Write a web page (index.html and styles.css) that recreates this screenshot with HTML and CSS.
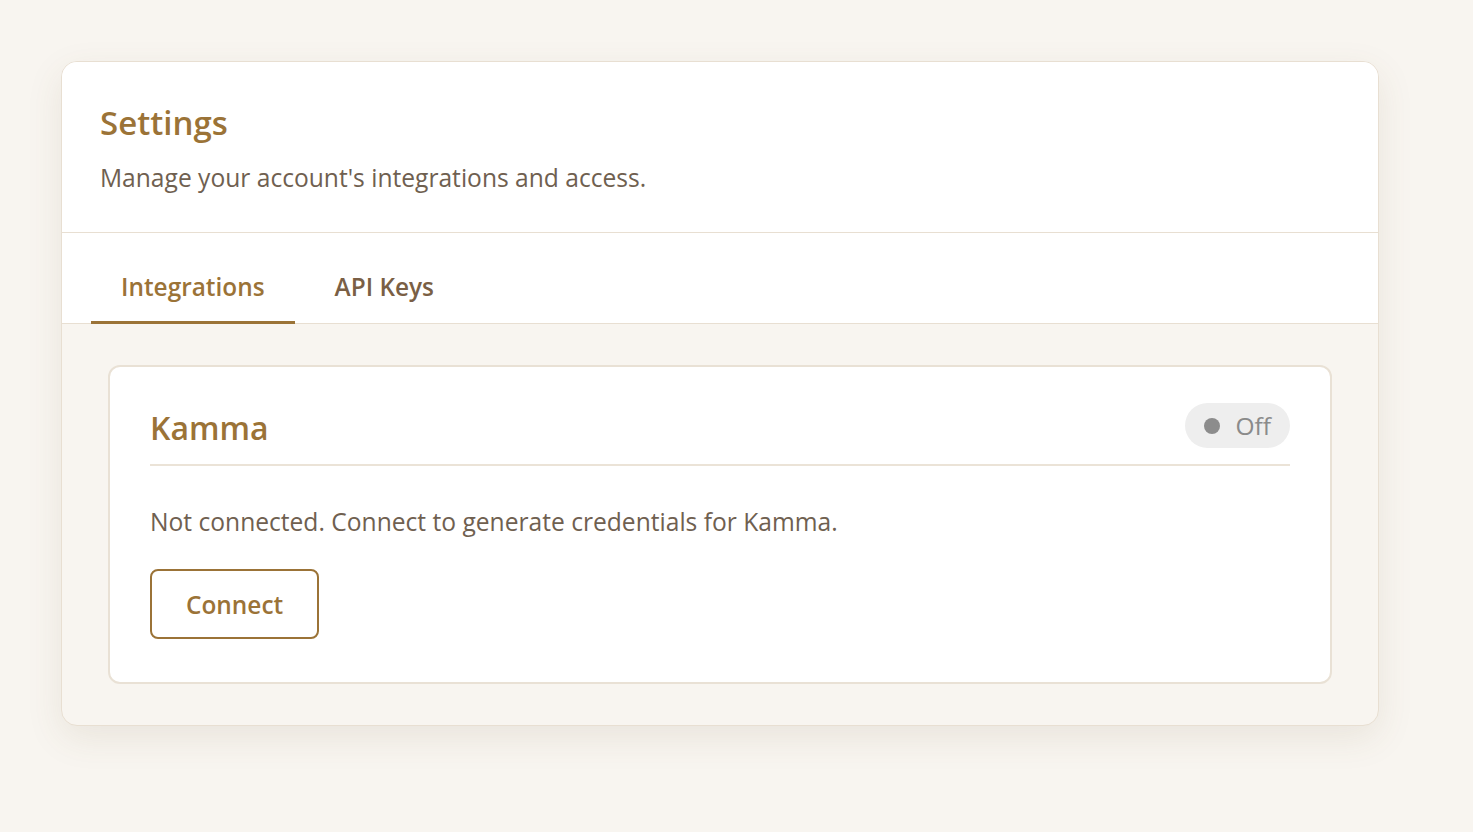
FILE: index.html
```html
<!DOCTYPE html>
<html lang="en">
<head>
<meta charset="utf-8">
<title>Settings</title>
<link rel="stylesheet" href="styles.css">
</head>
<body>
<main class="page">
  <section class="panel">
    <header class="panel-head">
      <h1 class="title">Settings</h1>
      <p class="subtitle">Manage your account's integrations and access.</p>
    </header>
    <nav class="tabs">
      <button class="tab tab-active">Integrations</button>
      <button class="tab">API Keys</button>
    </nav>
    <div class="panel-body">
      <article class="integration">
        <div class="integration-head">
          <h2 class="integration-name">Kamma</h2>
          <span class="status"><span class="status-dot"></span>Off</span>
        </div>
        <p class="integration-text">Not connected. Connect to generate credentials for Kamma.</p>
        <button class="btn-outline">Connect</button>
      </article>
    </div>
  </section>
</main>
</body>
</html>
```

FILE: styles.css
```css
* { box-sizing: border-box; }
html, body { margin: 0; padding: 0; }
body {
  background: #f8f5f0;
  font-family: "Open Sans", "Noto Sans", sans-serif;
  color: #6b5b4a;
  min-height: 832px;
}
.page {
  padding: 61px 0 0 61px;
}
.panel {
  width: 1318px;
  background: #f8f5f0;
  border: 1px solid #e8dfd2;
  border-radius: 16px;
  box-shadow: 0 12px 36px rgba(110, 85, 50, 0.10);
  overflow: hidden;
}
.panel-head {
  background: #ffffff;
  padding: 39px 38px 0 38px;
  height: 171px;
  border-bottom: 1px solid #e8dfd2;
}
.title {
  margin: 0;
  font-size: 33px;
  line-height: 44px;
  font-weight: 600;
  color: #9b7337;
}
.subtitle {
  margin: 17px 0 0 0;
  font-size: 24.6px;
  line-height: 32px;
  color: #6f6050;
}
.tabs {
  background: #ffffff;
  display: flex;
  gap: 10px;
  padding: 20px 0 0 29px;
  border-bottom: 1px solid #e8dfd2;
}
.tab {
  font-family: inherit;
  background: none;
  border: none;
  border-bottom: 3px solid transparent;
  margin-bottom: -1px;
  padding: 18px 30px 18px 30px;
  font-size: 24.4px;
  line-height: 32px;
  font-weight: 600;
  color: #7a5f45;
  cursor: pointer;
}
.tab-active {
  color: #9b7337;
  border-bottom-color: #9b7337;
}
.panel-body {
  padding: 41px 46px 41px 46px;
}
.integration {
  background: #ffffff;
  border: 2px solid #e9e1d5;
  border-radius: 12px;
  padding: 36px 40px 43px 40px;
}
.integration-head {
  display: flex;
  align-items: center;
  justify-content: space-between;
  padding-bottom: 16px;
  border-bottom: 2px solid #ebe3d7;
}
.integration-name {
  margin: 0;
  padding-top: 5px;
  font-size: 32px;
  line-height: 40px;
  font-weight: 600;
  color: #9b7337;
}
.status {
  display: flex;
  align-items: center;
  gap: 15px;
  height: 45px;
  padding: 0 19px;
  border-radius: 23px;
  background: #eeeeee;
  color: #8a8a8a;
  font-size: 24.5px;
}
.status-dot {
  width: 16px;
  height: 16px;
  border-radius: 50%;
  background: #8c8c8c;
}
.integration-text {
  margin: 40px 0 31px 0;
  font-size: 24.6px;
  line-height: 32px;
  color: #6f6050;
}
.btn-outline {
  font-family: inherit;
  height: 70px;
  padding: 0 34px;
  background: #ffffff;
  border: 2px solid #9b7337;
  border-radius: 8px;
  font-size: 24.4px;
  font-weight: 600;
  color: #9b7337;
  cursor: pointer;
}
```
